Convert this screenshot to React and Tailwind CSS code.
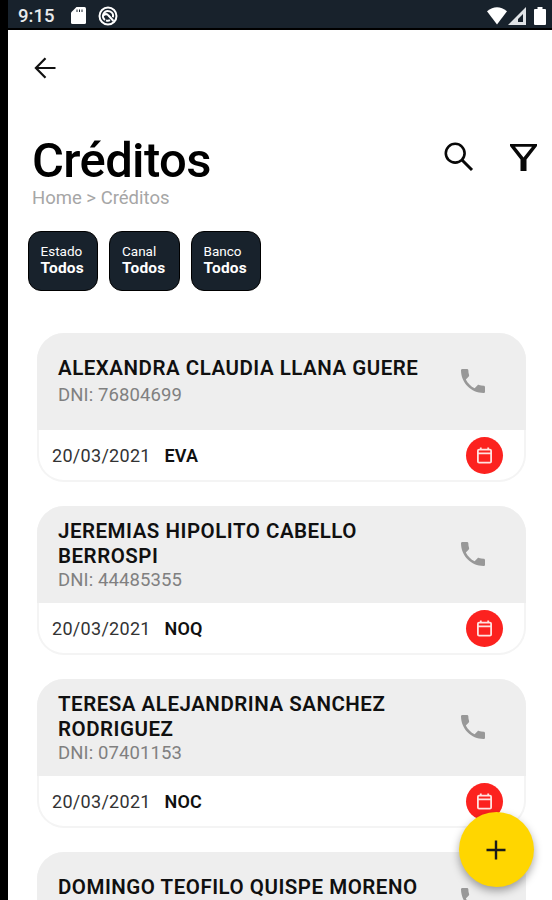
import { MdPhone } from 'react-icons/md';

const filters = [
  { id: 'estado', label: 'Estado', value: 'Todos' },
  { id: 'canal', label: 'Canal', value: 'Todos' },
  { id: 'banco', label: 'Banco', value: 'Todos' }
];

const credits = [
  { id: 1, dni: '76804699', lines: ['ALEXANDRA CLAUDIA LLANA GUERE'], date: '20/03/2021', status: 'EVA' },
  { id: 2, dni: '44485355', lines: ['JEREMIAS HIPOLITO CABELLO', 'BERROSPI'], date: '20/03/2021', status: 'NOQ' },
  { id: 3, dni: '07401153', lines: ['TERESA ALEJANDRINA SANCHEZ', 'RODRIGUEZ'], date: '20/03/2021', status: 'NOC' },
  { id: 4, lines: ['DOMINGO TEOFILO QUISPE MORENO'] }
];

function StatusBar() {
  return (
    <div className="flex h-[30px] shrink-0 items-center border-b-2 border-black bg-[#18222c] pl-[10px] pr-[6px] pt-[3px] text-white">
      <span className="w-[53px] pt-px text-[18.5px] font-medium leading-none text-[#e8eaec]">9:15</span>
      <svg className="h-[17px] w-[15px]" viewBox="0 0 15 17">
        <path d="M5.5 0H13.5Q15 0 15 1.5V15.5Q15 17 13.5 17H1.5Q0 17 0 15.5V5.5Z" fill="currentColor" />
        <path d="M6 2.5v2.5M8.5 2.5v2.5M11 2.5v2.5" stroke="#18222c" strokeWidth="1" />
      </svg>
      <svg className="ml-[12px] h-5 w-5" viewBox="0 0 20 20" fill="none" stroke="currentColor">
        <circle cx="10" cy="10" r="8.5" strokeWidth="2" />
        <path d="M7 14A5 5 0 1 1 14.9 11.2" strokeWidth="2" />
        <path d="M5.5 9.2Q8.5 7 10.5 9.5L15.5 15M8 14.3Q10 15.2 12 14.2" strokeWidth="2" />
      </svg>
      <svg className="ml-auto h-[18px] w-5" viewBox="0 0 20 18">
        <path d="M0 4.2Q10-3.5 20 4.2L10 17.5Z" fill="currentColor" />
      </svg>
      <svg className="ml-[1px] h-[18px] w-[18px]" viewBox="0 0 18 18">
        <path fillRule="evenodd" d="M18 0V18H0ZM15 7L10 12V15H15Z" fill="#e0e3e6" />
      </svg>
      <svg className="ml-[8px] h-[18px] w-[12px]" viewBox="0 0 12 18">
        <path d="M3.5 0h5v2H11q1 0 1 1v14q0 1-1 1H1q-1 0-1-1V3q0-1 1-1h2.5z" fill="currentColor" />
      </svg>
    </div>
  );
}

function CalendarIcon() {
  return (
    <svg className="h-[17px] w-[15px]" viewBox="0 0 15 17" fill="none" stroke="#ffe3e1" strokeWidth="1.8">
      <rect x="0.9" y="2.6" width="13.2" height="13" rx="1.2" />
      <path d="M1 6.4H14M3.8 0.4V3M11.2 0.4V3" />
    </svg>
  );
}

function CreditCard({ credit }) {
  const twoLines = credit.lines.length > 1;

  return (
    <article className="h-[149px] shrink-0 overflow-hidden rounded-[27px] bg-white shadow-[inset_0_0_0_2px_#f4f4f4]">
      <div className="flex h-[97px] items-center bg-[#eeeeee] pl-[21px] pr-[37px]">
        <div className="flex-1">
          <h2 className="whitespace-nowrap text-[20.5px] font-semibold leading-[25px] tracking-[0.51px] text-[#101010]">
            {credit.lines.map((line) => (
              <span key={line} className="block">{line}</span>
            ))}
          </h2>
          <p className={twoLines ? 'h-[22px] text-[18.5px] leading-[22px] tracking-[0.1px] text-[#808080]' : 'mb-px mt-[3px] h-[22px] text-[18.5px] leading-[22px] tracking-[0.1px] text-[#808080]'}>
            {credit.dni && `DNI: ${credit.dni}`}
          </p>
        </div>
        <MdPhone className="-mt-px h-8 w-8 text-[#989898]" />
      </div>
      {credit.date && (
        <div className="flex h-[50px] items-center pl-[15px] pr-[23px] text-[18px]">
          <span className="w-[112.5px] tracking-[0.3px] text-[#333]">{credit.date}</span>
          <span className="font-semibold tracking-[0.2px] text-[#101010]">{credit.status}</span>
          <button className="ml-auto flex h-[37px] w-[37px] items-center justify-center rounded-full bg-[#fc221f]">
            <CalendarIcon />
          </button>
        </div>
      )}
    </article>
  );
}

export default function App() {
  return (
    <main className="relative flex h-[900px] w-[552px] flex-col overflow-hidden border-l-8 border-black bg-white font-[Roboto,sans-serif]">
      <StatusBar />

      <header className="px-[14px]">
        <button className="ml-[12px] mt-[27px] block">
          <svg className="h-[22px] w-[22px]" viewBox="0 0 22 22" fill="none" stroke="#111" strokeWidth="2.2">
            <path d="M21.5 11H2.5M11.5 1.2L1.9 11L11.5 20.8" />
          </svg>
        </button>

        <div className="mt-[54px] flex items-start pl-[10px]">
          <div>
            <h1 className="text-[49px] font-medium leading-[56px] tracking-[-0.65px] text-black">Créditos</h1>
            <p className="text-[18.5px] leading-[18px] text-[#a6a6a6]">Home &gt; Créditos</p>
          </div>
          <svg className="ml-auto mt-[9px] h-[30px] w-[30px]" viewBox="0 0 30 30" fill="none" stroke="#080808">
            <circle cx="11.2" cy="11.2" r="9.4" strokeWidth="2.6" />
            <path d="M18 18L28 28" strokeWidth="3" />
          </svg>
          <svg className="ml-[36px] mr-px mt-[11px] h-[27px] w-[27px]" viewBox="0 0 27 27">
            <path fillRule="evenodd" d="M0 0H27V2L16.5 15.5V27H10.5V15.5L0 2ZM5 2.8L13.5 13.5L22 2.8Z" fill="#080808" />
          </svg>
        </div>
      </header>

      <div className="ml-[19.5px] mt-[24px] flex gap-[11px]">
        {filters.map((filter) => (
          <button
            key={filter.id}
            className="h-[60px] w-[70.5px] rounded-[13px] border border-black bg-[#18222c] pb-px pl-3 text-left text-white"
          >
            <span className="block text-[13.5px] leading-[16px]">{filter.label}</span>
            <span className="block text-[15.5px] font-bold leading-[19px] tracking-[0.2px]">{filter.value}</span>
          </button>
        ))}
      </div>

      <section className="mt-[42px] flex flex-col gap-6 pl-[29px] pr-[26px]">
        {credits.map((credit) => (
          <CreditCard key={credit.id} credit={credit} />
        ))}
      </section>

      <button className="absolute bottom-[13px] right-[18.5px] flex h-[75px] w-[75px] items-center justify-center rounded-full bg-[#ffd600] shadow-[0_4px_8px_rgba(0,0,0,0.35)]">
        <svg className="h-5 w-5" viewBox="0 0 20 20" stroke="#1a1a1a" strokeWidth="2.4">
          <path d="M10 0.5V19.5M0.5 10H19.5" />
        </svg>
      </button>
    </main>
  );
}
